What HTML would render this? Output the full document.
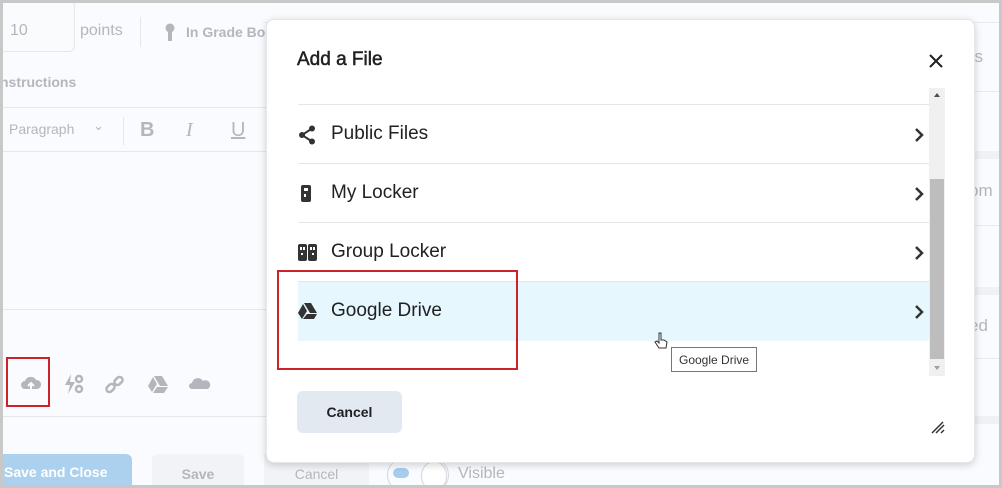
<!DOCTYPE html>
<html><head><meta charset="utf-8"><style>
*{margin:0;padding:0;box-sizing:border-box}
body{width:1002px;height:488px;overflow:hidden;font-family:"Liberation Sans",sans-serif;background:#c8c8c8;position:relative}
.page{position:absolute;left:3px;top:3px;width:996px;height:482px;background:#f9fbfe;overflow:hidden}
.f{color:#b3b7bd;position:absolute;font-size:15px}
.dlg{position:absolute;left:266px;top:19px;width:709px;height:444px;background:#fff;border-radius:8px;box-shadow:0 2px 8px rgba(0,0,0,.18);border:1px solid #e3e6ea}
.row{position:absolute;left:31px;width:631px;height:59px;border-top:1px solid #e3e6ea;font-size:19px;color:#202122}
.row span{position:absolute;left:33px;top:18px}
.row svg.ic{position:absolute;left:0;top:20px}
.row .chev{position:absolute;right:5px;top:23px}
</style></head><body>
<div class="page">
 <div style="position:absolute;left:-10px;top:-3px;width:82px;height:52px;border:1px solid #e4e7eb;border-radius:6px;background:#fafbfd"></div>
 <div class="f" style="left:7px;top:19px;font-size:16px">10</div>
 <div class="f" style="left:77px;top:19px;font-size:16px">points</div>
 <div style="position:absolute;left:137px;top:14px;width:1px;height:30px;background:#e4e7eb"></div>
 <svg style="position:absolute;left:161px;top:20px" width="12" height="20"><circle cx="6" cy="5" r="4.5" fill="#b3b7bd"/><rect x="4" y="8" width="4" height="10" fill="#b3b7bd"/></svg>
 <div class="f" style="left:183px;top:21px;font-size:14px;font-weight:bold">In Grade Book</div>
 <div style="position:absolute;left:260px;top:10px;width:740px;height:10px;border-bottom:1px solid #e8eaee"></div>
 <div class="f" style="left:-3px;top:71px;font-size:14px;font-weight:bold">nstructions</div>
 <div style="position:absolute;left:0;top:104px;width:300px;height:1px;background:#e4e7eb"></div>
 <div class="f" style="left:6px;top:118px;font-size:14px">Paragraph</div>
 <div class="f" style="left:90px;top:115px;font-size:13px">&#8964;</div>
 <div style="position:absolute;left:120px;top:114px;width:1px;height:28px;background:#e4e7eb"></div>
 <div class="f" style="left:137px;top:116px;font-size:20px;font-weight:bold">B</div>
 <div class="f" style="left:183px;top:116px;font-size:20px;font-family:'Liberation Serif',serif;font-style:italic">I</div>
 <div class="f" style="left:228px;top:116px;font-size:20px;text-decoration:underline">U</div>
 <div style="position:absolute;left:0;top:148px;width:270px;height:1px;background:#e4e7eb"></div>
 <div style="position:absolute;left:0;top:306px;width:270px;height:1px;background:#e4e7eb"></div>
 <div style="position:absolute;left:0;top:413px;width:270px;height:1px;background:#e4e7eb"></div>
 <svg style="position:absolute;left:17px;top:372px" width="22" height="18" viewBox="0 0 22 18"><path d="M5 14a4 4 0 010-8 6 6 0 0111-1 4.5 4.5 0 011 9z" fill="#b3b7bd"/><path d="M11 16V8M8 11l3-3 3 3" stroke="#f9fbfe" stroke-width="2" fill="none"/></svg>
 <svg style="position:absolute;left:60px;top:370px" width="22" height="22"><path d="M8 1L2 12h5l-2 9 7-12H7z" fill="#b3b7bd"/><circle cx="16" cy="6" r="3" stroke="#b3b7bd" stroke-width="2.5" fill="none"/><circle cx="16" cy="16" r="3" stroke="#b3b7bd" stroke-width="2.5" fill="none"/></svg>
 <svg style="position:absolute;left:101px;top:371px" width="22" height="22"><g stroke="#b3b7bd" stroke-width="2.5" fill="none"><rect x="2" y="11" width="9" height="6" rx="3" transform="rotate(-45 6.5 14)"/><rect x="10" y="4" width="9" height="6" rx="3" transform="rotate(-45 14.5 7)"/></g></svg>
 <svg style="position:absolute;left:144px;top:372px" width="22" height="18"><path d="M7 1h8l6 10h-8z M6 2l4 7-5 8L1 11z M10 12h11l-4 6H6z" fill="#b3b7bd"/></svg>
 <svg style="position:absolute;left:186px;top:374px" width="22" height="14"><path d="M3 12a3 3 0 010-6 6 6 0 0111-2 4 4 0 015 8z" fill="#b3b7bd"/></svg>
 <div style="position:absolute;left:-20px;top:451px;width:149px;height:40px;background:#acd1ee;border-radius:6px"></div>
 <div style="position:absolute;left:1px;top:461px;color:#fff;font-size:14px;font-weight:bold">Save and Close</div>
 <div style="position:absolute;left:149px;top:451px;width:92px;height:40px;background:#f1f3f6;border-radius:6px;color:#b3b7bd;font-size:14px;text-align:center;line-height:40px;font-weight:bold">Save</div>
 <div style="position:absolute;left:261px;top:451px;width:105px;height:40px;background:#f1f3f6;color:#b3b7bd;font-size:14px;text-align:center;line-height:40px">Cancel</div>
 <div style="position:absolute;left:384px;top:455px;width:62px;height:34px;border:1px solid #d4d8dd;border-radius:17px"></div>
 <div style="position:absolute;left:390px;top:465px;width:16px;height:10px;border-radius:5px;background:#a6cdee"></div>
 <div style="position:absolute;left:418px;top:458px;width:26px;height:30px;border:1px solid #d4d8dd;border-radius:50%;background:#fff"></div>
 <div class="f" style="left:455px;top:462px;font-size:16px">Visible</div>
 <div class="f" style="left:962px;top:44px;font-size:17px">es</div>
 <div class="f" style="left:966px;top:178px;font-size:17px">om</div>
 <div class="f" style="left:966px;top:313px;font-size:17px">ed</div>
 <div style="position:absolute;left:960px;top:88px;width:40px;height:1px;background:#e8eaee"></div>
 <div style="position:absolute;left:960px;top:148px;width:40px;height:8px;background:#eff1f4"></div>
 <div style="position:absolute;left:960px;top:222px;width:40px;height:1px;background:#e8eaee"></div>
 <div style="position:absolute;left:960px;top:284px;width:40px;height:8px;background:#eff1f4"></div>
 <div style="position:absolute;left:960px;top:355px;width:40px;height:1px;background:#e8eaee"></div>
 <div style="position:absolute;left:960px;top:413px;width:40px;height:8px;background:#eff1f4"></div>
</div>

<div class="dlg">
 <div style="position:absolute;left:30px;top:29px;font-size:19px;color:#202122;-webkit-text-stroke:0.5px #202122">Add a File</div>
 <svg style="position:absolute;left:662px;top:34px" width="14" height="14"><path d="M1 1l12 12M13 1L1 13" stroke="#202122" stroke-width="2"/></svg>
 <div style="position:absolute;left:662px;top:68px;width:16px;height:288px;background:#f0f0f0"></div>
 <svg style="position:absolute;left:662px;top:70px" width="16" height="10"><path d="M5 7l3-4 3 4z" fill="#505050"/></svg>
 <div style="position:absolute;left:663px;top:159px;width:14px;height:180px;background:#bdbdbd"></div>
 <svg style="position:absolute;left:662px;top:343px" width="16" height="10"><path d="M5 3l3 4 3-4z" fill="#a0a0a0"/></svg>

 <div class="row" style="top:84px"><svg class="ic" width="18" height="20"><circle cx="14" cy="3.5" r="3" fill="#333"/><circle cx="4" cy="10" r="3" fill="#333"/><circle cx="14" cy="16.5" r="3" fill="#333"/><path d="M14 3.5L4 10l10 6.5" stroke="#333" stroke-width="2" fill="none"/></svg><span>Public Files</span><svg class="chev" width="10" height="14"><path d="M2 1l6 6-6 6" stroke="#333" stroke-width="2.5" fill="none"/></svg></div>
 <div class="row" style="top:143px"><svg class="ic" width="18" height="20"><rect x="3" y="1" width="10" height="17" rx="2" fill="#333"/><rect x="6" y="4" width="4" height="3" fill="#fff"/><rect x="6" y="10" width="2" height="3" fill="#fff"/></svg><span>My Locker</span><svg class="chev" width="10" height="14"><path d="M2 1l6 6-6 6" stroke="#333" stroke-width="2.5" fill="none"/></svg></div>
 <div class="row" style="top:202px"><svg class="ic" width="20" height="20"><rect x="0" y="1" width="9" height="17" rx="2" fill="#333"/><rect x="10" y="1" width="9" height="17" rx="2" fill="#333"/><rect x="2" y="4" width="2" height="3" fill="#fff"/><rect x="5" y="4" width="2" height="3" fill="#fff"/><rect x="12" y="4" width="2" height="3" fill="#fff"/><rect x="15" y="4" width="2" height="3" fill="#fff"/><rect x="3" y="10" width="2" height="2" fill="#fff"/><rect x="14" y="10" width="2" height="2" fill="#fff"/></svg><span>Group Locker</span><svg class="chev" width="10" height="14"><path d="M2 1l6 6-6 6" stroke="#333" stroke-width="2.5" fill="none"/></svg></div>
 <div class="row" style="top:261px;background:#e6f7fd;height:60px"><svg class="ic" width="20" height="18"><path d="M6 1h7l6 10h-7z M5 2l4 7-5 8L0 11z M9 12h10l-3 5H5z" fill="#333"/></svg><span>Google Drive</span><svg class="chev" width="10" height="14"><path d="M2 1l6 6-6 6" stroke="#333" stroke-width="2.5" fill="none"/></svg></div>

 <div style="position:absolute;left:30px;top:371px;width:105px;height:42px;background:#e3e9f1;border-radius:6px;font-size:14px;font-weight:bold;color:#202122;text-align:center;line-height:42px">Cancel</div>
 <svg style="position:absolute;left:664px;top:400px" width="14" height="14"><path d="M1 13L12 2M5 13l8-8M10 13l3-3" stroke="#333" stroke-width="1.5"/></svg>
</div>

<div style="position:absolute;left:277px;top:270px;width:241px;height:100px;border:2px solid #cc2229"></div>
<div style="position:absolute;left:6px;top:357px;width:44px;height:50px;border:2px solid #cc2229"></div>

<svg style="position:absolute;left:653px;top:331px" width="16" height="22"><path d="M6 2v10l-2-2-2 1 4 6h7l1-6-3-2-3 0V2z" fill="#fff" stroke="#333" stroke-width="1"/></svg>
<div style="position:absolute;left:671px;top:347px;width:86px;height:25px;background:#fff;border:1px solid #767676;font-size:12px;color:#333;padding:5px 0 0 7px">Google Drive</div>
</body></html>
